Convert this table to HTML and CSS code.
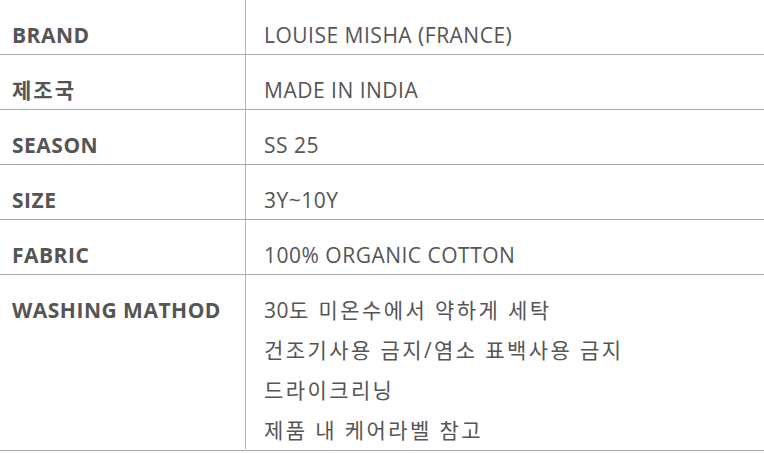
FILE: index.html
```html
<!DOCTYPE html>
<html lang="ko">
<head>
<meta charset="utf-8">
<title>Product info</title>
<link rel="stylesheet" href="styles.css">
</head>
<body>
<div class="spec">
  <div class="row">
    <div class="label">BRAND</div>
    <div class="value">LOUISE MISHA (FRANCE)</div>
  </div>
  <div class="row">
    <div class="label ko">제조국</div>
    <div class="value">MADE IN INDIA</div>
  </div>
  <div class="row">
    <div class="label">SEASON</div>
    <div class="value">SS 25</div>
  </div>
  <div class="row">
    <div class="label">SIZE</div>
    <div class="value">3Y~10Y</div>
  </div>
  <div class="row">
    <div class="label">FABRIC</div>
    <div class="value">100% ORGANIC COTTON</div>
  </div>
  <div class="row row-multi">
    <div class="label">WASHING MATHOD</div>
    <div class="value">
      <div class="line"><span class="num">30</span>도 미온수에서 약하게 세탁</div>
      <div class="line">건조기사용 금지/염소 표백사용 금지</div>
      <div class="line">드라이크리닝</div>
      <div class="line">제품 내 케어라벨 참고</div>
    </div>
  </div>
</div>
</body>
</html>
```

FILE: styles.css
```css
html, body {
  margin: 0;
  padding: 0;
  background: #ffffff;
}

body {
  font-family: "Open Sans", "Noto Sans CJK KR", sans-serif;
  font-size: 21px;
  color: #555555;
}

.spec {
  width: 764px;
}

.row {
  display: grid;
  grid-template-columns: 246px 1fr;
  border-bottom: 1px solid #aaaaaa;
}

.label {
  box-sizing: border-box;
  border-right: 1px solid #b4b4b4;
  padding: 17px 0 0 12px;
  height: 54px;
  line-height: 37px;
  font-weight: 700;
  letter-spacing: 0.5px;
  color: #555555;
}

.label.ko {
  letter-spacing: 2px;
}

.value {
  padding: 17px 0 0 18px;
  height: 37px;
  line-height: 37px;
  letter-spacing: 0.5px;
  color: #555555;
}

.row-multi .label {
  height: 174px;
}

.row-multi .value {
  height: auto;
  padding-top: 15px;
  line-height: 40px;
}

.line {
  letter-spacing: 2.4px;
}

.line .num {
  letter-spacing: 0.5px;
}
```
